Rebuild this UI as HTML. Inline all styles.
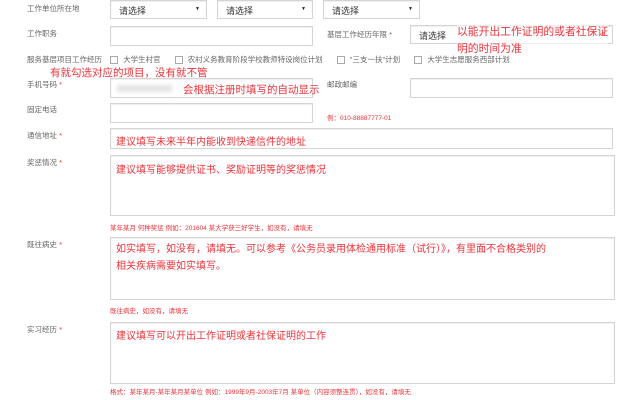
<!DOCTYPE html>
<html><head><meta charset="utf-8"><style>
body{margin:0;width:640px;height:400px;background:#fff;position:relative;overflow:hidden;font-family:"Liberation Sans","Noto Sans CJK SC",sans-serif;}
.a{position:absolute;white-space:nowrap}
.l{font-size:7.5px;color:#666}
.b{position:absolute;border:1px solid #d4d4d4;background:#fff;box-sizing:border-box;box-shadow:inset 0 1px 1px #eee}
.s{font-size:9px;color:#333;padding:3px 8px}
.s:after{content:"▼";position:absolute;right:6px;top:5px;font-size:5px;color:#222}
.r{color:#e8333a}
.h{font-size:6.5px;color:#e8333a}
.cb{display:inline-block;width:6px;height:6px;border:1px solid #aaa;margin-right:5px;vertical-align:middle}
</style></head><body>
<div class="a l" style="left:27px;top:3px">工作单位所在地</div>
<div class="b s" style="left:110px;top:0;width:97px;height:19px">请选择</div>
<div class="b s" style="left:217px;top:0;width:96px;height:19px">请选择</div>
<div class="b s" style="left:323px;top:0;width:97px;height:19px">请选择</div>

<div class="a l" style="left:27px;top:28px">工作职务</div>
<div class="b" style="left:110px;top:26px;width:203px;height:20px"></div>
<div class="a l" style="left:327px;top:29px">基层工作经历年限 *</div>
<div class="b s" style="left:410px;top:25px;width:203px;height:19px">请选择</div>
<div class="a r" style="left:457px;top:24px;font-size:10.8px;line-height:17px;background:rgba(255,255,255,.6)">以能开出工作证明的或者社保证<br>明的时间为准</div>

<div class="a l" style="left:27px;top:54px">服务基层项目工作经历 <span class="cb" style="margin-left:6px"></span>大学生村官 <span class="cb" style="margin-left:12px"></span>农村义务教育阶段学校教师特设岗位计划 <span class="cb" style="margin-left:12px"></span>"三支一扶"计划 <span class="cb" style="margin-left:12px"></span>大学生志愿服务西部计划</div>
<div class="a r" style="left:50px;top:65px;font-size:10.5px">有就勾选对应的项目，没有就不管</div>

<div class="a l" style="left:27px;top:79px">手机号码 <span class="r">*</span></div>
<div class="b" style="left:110px;top:78px;width:203px;height:20px"><div style="position:absolute;left:6px;top:6px;width:55px;height:7px;background:#e2e2e2;filter:blur(2px)"></div></div>
<div class="a r" style="left:183px;top:82px;font-size:10.5px">会根据注册时填写的自动显示</div>
<div class="a l" style="left:327px;top:79px">邮政邮编</div>
<div class="b" style="left:410px;top:78px;width:203px;height:20px"></div>

<div class="a l" style="left:27px;top:104px">固定电话</div>
<div class="b" style="left:110px;top:103px;width:203px;height:20px"></div>
<div class="a h" style="left:327px;top:112px">例：010-88887777-01</div>

<div class="a l" style="left:27px;top:130px">通信地址 <span class="r">*</span></div>
<div class="b" style="left:110px;top:128px;width:503px;height:21px"><div class="a r" style="left:5px;top:4px;font-size:10px">建议填写未来半年内能收到快递信件的地址</div></div>

<div class="a l" style="left:27px;top:157px">奖惩情况 <span class="r">*</span></div>
<div class="b" style="left:110px;top:155px;width:505px;height:61px"><div class="a r" style="left:5px;top:5px;font-size:10px">建议填写能够提供证书、奖励证明等的奖惩情况</div></div>
<div class="a h" style="left:110px;top:222px">某年某月 何种奖惩 例如：201604 某大学获三好学生，如没有，请填无</div>

<div class="a l" style="left:27px;top:239px">既往病史 <span class="r">*</span></div>
<div class="b" style="left:110px;top:237px;width:505px;height:63px"><div class="a r" style="left:5px;top:3px;font-size:10px;line-height:17px">如实填写，如没有，请填无。可以参考《公务员录用体检通用标准（试行）》，有里面不合格类别的<br>相关疾病需要如实填写。</div></div>
<div class="a h" style="left:110px;top:305px">既往病史，如没有，请填无</div>

<div class="a l" style="left:27px;top:324px">实习经历 <span class="r">*</span></div>
<div class="b" style="left:110px;top:322px;width:505px;height:62px"><div class="a r" style="left:5px;top:4px;font-size:10px">建议填写可以开出工作证明或者社保证明的工作</div></div>
<div class="a h" style="left:110px;top:386px">格式：某年某月-某年某月某单位 例如：1999年9月-2003年7月 某单位（内容须整连贯），如没有，请填无</div>
</body></html>
